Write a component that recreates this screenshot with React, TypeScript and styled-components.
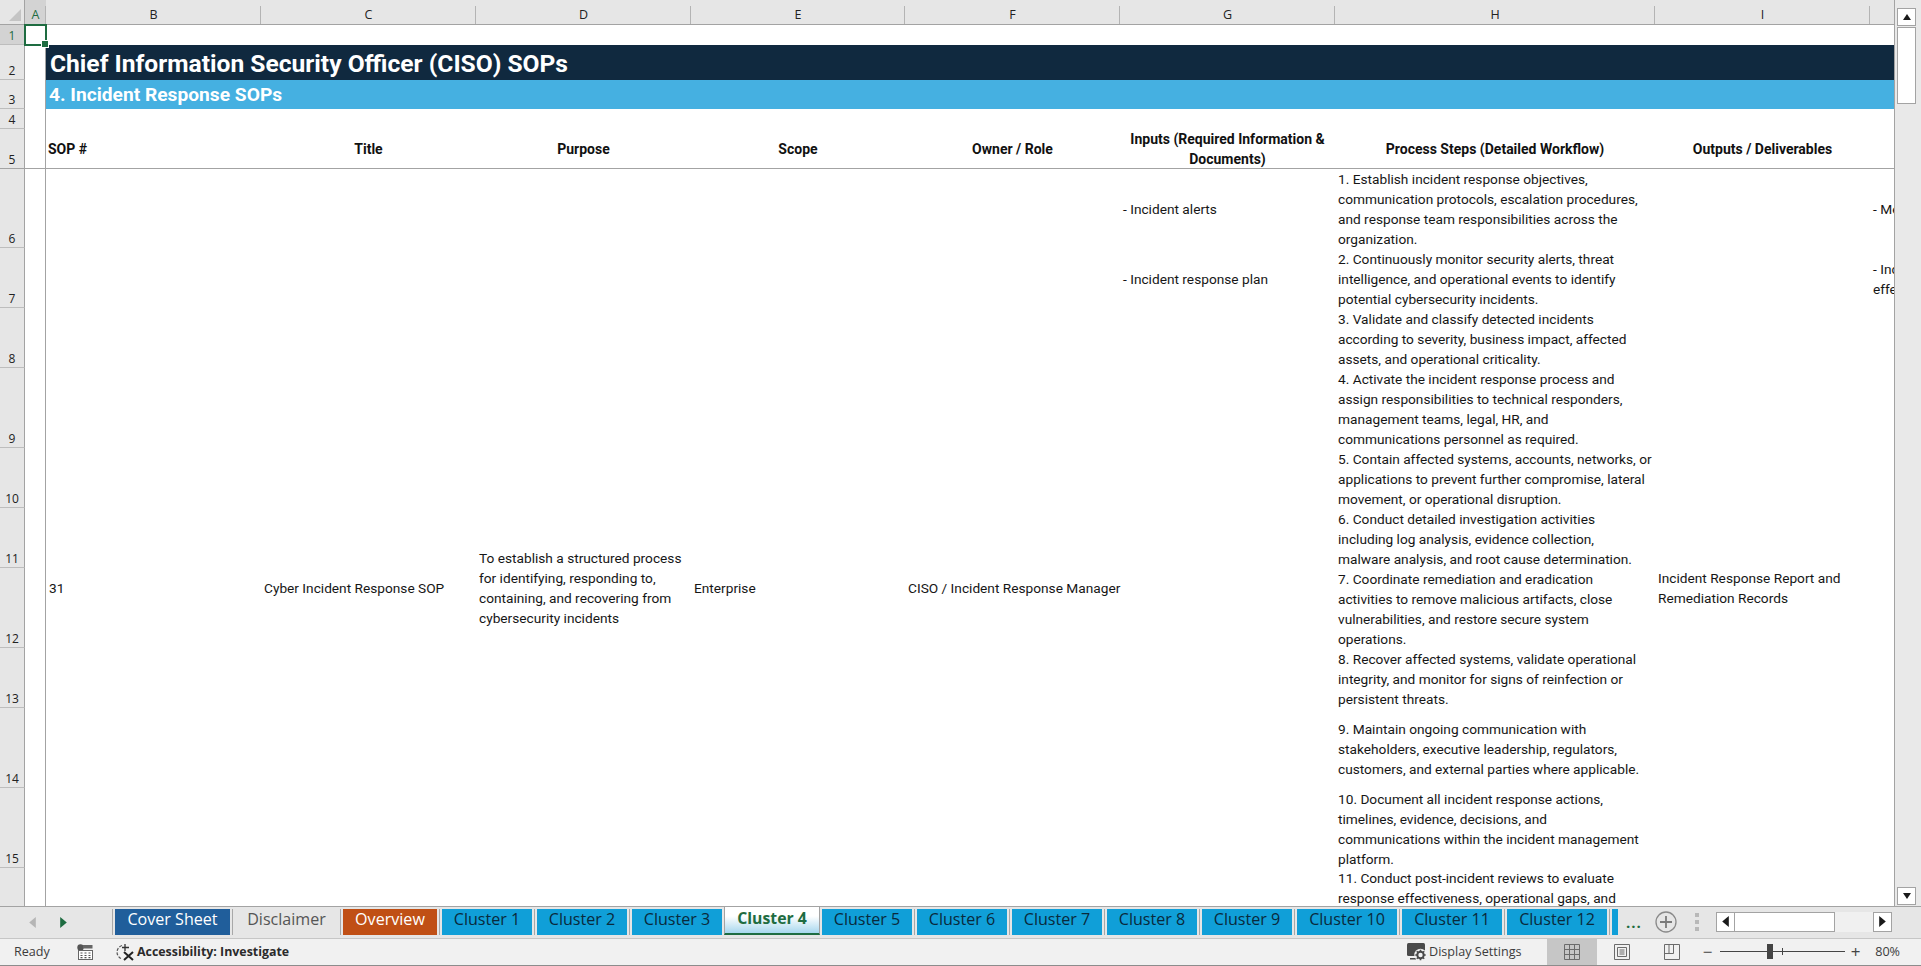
import React, {FC} from 'react';
import styled, {createGlobalStyle} from 'styled-components';

const SHEET_FONT = `Roboto, "Liberation Sans", sans-serif`;
const UI_FONT = `"Open Sans", "Noto Sans", sans-serif`;
const GREEN = '#1e6c41';

const GlobalStyle = createGlobalStyle`
  html, body {
    margin: 0;
    padding: 0;
    background: #e6e6e6;
  }
  * {
    box-sizing: border-box;
  }
`;

const Window = styled.div`
  width: 1921px;
  height: 966px;
  display: flex;
  flex-direction: column;
  overflow: hidden;
`;

const SheetArea = styled.div`
  height: 906px;
  display: flex;
`;

const Grid = styled.div`
  width: 1894px;
  height: 906px;
  overflow: hidden;
  background: #fff;
  display: grid;
  grid-template-columns: 25px 21px 215px 215px 215px 214px 215px 215px 320px 215px 215px;
  grid-template-rows: 25px 20px 35px 29px 20px 40px 79px 60px 60px 80px 60px 60px 80px 60px 80px 80px 80px 58px;
  font-family: ${SHEET_FONT};
  font-size: 13.7px;
  line-height: 20px;
  color: #161616;
`;

const Corner = styled.div`
  grid-column: 1;
  grid-row: 1;
  background: #e6e6e6;
  border-bottom: 1px solid #a3a3a3;
  border-right: 1px solid #a3a3a3;
  position: relative;

  &::after {
    content: '';
    position: absolute;
    right: 3px;
    bottom: 3px;
    border-style: solid;
    border-width: 0 0 12px 12px;
    border-color: transparent transparent #c4c4c4 transparent;
  }
`;

const ColHead = styled.div<{ $col: number; $active?: boolean }>`
  grid-column: ${p => p.$col};
  grid-row: 1;
  background: ${p => (p.$active ? '#d3d3d3' : '#e6e6e6')};
  color: ${p => (p.$active ? GREEN : '#222')};
  border-bottom: 1px solid #a3a3a3;
  font-family: ${UI_FONT};
  font-size: 12.5px;
  line-height: 18px;
  padding-top: 6px;
  text-align: center;
  position: relative;

  &::after {
    content: '';
    position: absolute;
    right: 0;
    top: 6px;
    bottom: 0;
    width: 1px;
    background: #b4b4b4;
  }
`;

const RowHead = styled.div<{ $row: number; $span?: number; $active?: boolean; $last?: boolean }>`
  grid-column: 1;
  grid-row: ${p => p.$row} / span ${p => p.$span || 1};
  background: ${p => (p.$active ? '#d3d3d3' : '#e6e6e6')};
  color: ${p => (p.$active ? GREEN : '#222')};
  border-right: 1px solid #a3a3a3;
  border-bottom: 1px solid ${p => (p.$last ? '#a3a3a3' : '#bdbdbd')};
  font-family: ${UI_FONT};
  font-size: 12px;
  line-height: 16px;
  display: flex;
  align-items: flex-end;
  justify-content: center;
`;

const FrozenColumn = styled.div<{ $row: number; $span: number; $header?: boolean }>`
  grid-column: 2;
  grid-row: ${p => p.$row} / span ${p => p.$span};
  border-right: 1px solid #a3a3a3;
  border-bottom: ${p => (p.$header ? '1px solid #a3a3a3' : 'none')};
`;

const SelectedCell = styled.div`
  grid-column: 2;
  grid-row: 2;
  border: 2px solid ${GREEN};
  margin: -1px -1px -1px -1px;
  position: relative;
  z-index: 2;

  &::after {
    content: '';
    position: absolute;
    right: -4px;
    bottom: -4px;
    width: 6px;
    height: 6px;
    background: ${GREEN};
    border: 1px solid #fff;
  }
`;

const Band = styled.div<{ $row: number; $sub?: boolean }>`
  grid-column: 3 / -1;
  grid-row: ${p => p.$row};
  background: ${p => (p.$sub ? '#45b0e1' : '#10293f')};
  color: #fff;
  font-weight: 700;
  font-size: ${p => (p.$sub ? '19.2px' : '24.6px')};
  line-height: 1;
  padding: ${p => (p.$sub ? '1px 0 0 3px' : '4px 0 0 4px')};
  display: flex;
  align-items: center;
`;

const HeaderCell = styled.div<{ $col: number; $left?: boolean }>`
  grid-column: ${p => p.$col};
  grid-row: 6;
  border-bottom: 1px solid #a3a3a3;
  font-weight: 700;
  font-size: 14px;
  color: #111;
  display: flex;
  align-items: center;
  justify-content: ${p => (p.$left ? 'flex-start' : 'center')};
  text-align: ${p => (p.$left ? 'left' : 'center')};
  padding: 0 2px;
`;

const MergedCell = styled.div<{ $col: number }>`
  grid-column: ${p => p.$col};
  grid-row: 7 / span 12;
  display: flex;
  align-items: center;
  padding-left: 3px;
  white-space: pre;
`;

const RowCell = styled.div<{ $col: number; $row: number; $top?: boolean }>`
  grid-column: ${p => p.$col};
  grid-row: ${p => p.$row};
  display: flex;
  align-items: ${p => (p.$top ? 'flex-start' : 'center')};
  padding: ${p => (p.$top ? '0 3px' : '1px 3px 0')};
  white-space: pre-line;
  overflow: hidden;
`;

const VScroll = styled.div`
  flex: 1;
  background: #e9e9e9;
  border-left: 1px solid #a3a3a3;
  padding: 8px 5px 1px 2px;
  display: flex;
  flex-direction: column;
  gap: 1px;
`;

const VButton = styled.div<{ $h: number }>`
  height: ${p => p.$h}px;
  background: #fff;
  border: 1px solid #a3a3a3;
  display: flex;
  align-items: center;
  justify-content: center;
  flex: none;
`;

const VTrack = styled.div`
  flex: 1;
`;

const TabBar = styled.div`
  height: 32px;
  background: #e6e6e6;
  border-top: 1px solid #a3a3a3;
  display: flex;
  position: relative;
`;

const TabNav = styled.div`
  width: 110px;
  flex: none;
  display: flex;
  align-items: center;
  gap: 20px;
  padding: 0 0 0 27px;
`;

const TabList = styled.div`
  width: 1508px;
  flex: none;
  display: flex;
  align-items: flex-start;
  overflow: hidden;
`;

const TabSep = styled.div`
  width: 1px;
  height: 26px;
  margin: 2px 2px 0;
  background: #a8a8a8;
  flex: none;
`;

const Tab = styled.div<{ $w: number; $bg?: string; $fg: string }>`
  width: ${p => p.$w}px;
  height: 26px;
  margin-top: 2px;
  flex: none;
  background: ${p => p.$bg || 'transparent'};
  color: ${p => p.$fg};
  font-family: ${UI_FONT};
  font-size: 16.1px;
  line-height: 20px;
  text-align: center;
  overflow: hidden;
`;

const ActiveTab = styled.div`
  width: 96px;
  height: 29px;
  margin: -1px 2px 0 2px;
  flex: none;
  background: linear-gradient(#fff 35%, #a7d7ee);
  border: 1px solid #a3a3a3;
  border-bottom: 2px solid ${GREEN};
  color: ${GREEN};
  font-family: ${UI_FONT};
  font-size: 15.8px;
  font-weight: 700;
  line-height: 23px;
  text-align: center;
`;

const TabTools = styled.div`
  flex: 1;
  display: flex;
  align-items: center;
  padding-bottom: 2px;
`;

const MoreDots = styled.div`
  width: 30px;
  padding-left: 8px;
  color: ${GREEN};
  font-family: ${UI_FONT};
  font-size: 15px;
  font-weight: 700;
  letter-spacing: 1px;
  line-height: 18px;
`;

const PlusSlot = styled.div`
  width: 22px;
  height: 22px;
  margin-left: 7px;
`;

const Splitter = styled.div`
  width: 4px;
  height: 18px;
  margin-left: 18px;
  background: repeating-linear-gradient(#b8b8b8 0 4px, transparent 4px 7px);
`;

const HScroll = styled.div`
  margin-left: 17px;
  width: 176px;
  height: 20px;
  display: flex;
  background: #f0f0f0;
`;

const HButton = styled.div<{ $end?: boolean }>`
  width: 19px;
  background: #fff;
  border: 1px solid #a3a3a3;
  display: flex;
  align-items: center;
  justify-content: center;
  margin-left: ${p => (p.$end ? 'auto' : '0')};
  flex: none;
`;

const HThumb = styled.div`
  width: 100px;
  background: #fff;
  border: 1px solid #a3a3a3;
  border-left: none;
`;

const StatusBar = styled.div`
  height: 28px;
  background: #f1f1f1;
  border-top: 1px solid #c6c6c6;
  border-bottom: 1px solid #8c8c8c;
  padding-bottom: 1px;
  display: flex;
  align-items: center;
  font-family: ${UI_FONT};
  font-size: 12.6px;
  color: #3c3c3c;
`;

const Ready = styled.span`
  margin-left: 14px;
  width: 63px;
`;

const MacroSlot = styled.div`
  width: 38px;
  height: 16px;
`;

const A11y = styled.div`
  display: flex;
  align-items: center;
  gap: 2px;
  font-weight: 700;
  font-size: 12.4px;
  color: #2b2b2b;
`;

const DisplaySettings = styled.div`
  margin-left: auto;
  display: flex;
  align-items: center;
  gap: 2px;
`;

const ViewButtons = styled.div`
  display: flex;
  margin-left: 25px;
  align-self: stretch;
  margin-bottom: -1px;
`;

const ViewButton = styled.div<{ $active?: boolean }>`
  width: 50px;
  background: ${p => (p.$active ? '#c6c6c6' : 'transparent')};
  display: flex;
  align-items: center;
  justify-content: center;
`;

const ZoomGroup = styled.div`
  display: flex;
  align-items: center;
  margin-left: 5px;
  width: 219.5px;
  padding-right: 21px;
`;

const ZoomGlyph = styled.span`
  width: 12px;
  text-align: center;
  font-size: 17px;
  line-height: 20px;
  color: #444;
  flex: none;
`;

const Slider = styled.div`
  width: 125px;
  height: 1px;
  background: #444;
  margin: 0 5px 0 6px;
  flex: none;
  position: relative;
`;

const SliderThumb = styled.div`
  position: absolute;
  left: 47px;
  top: -7px;
  width: 6px;
  height: 15px;
  background: #444;
`;

const SliderTick = styled.div`
  position: absolute;
  left: 62px;
  top: -3px;
  width: 1px;
  height: 7px;
  background: #444;
`;

const ZoomValue = styled.span`
  margin-left: auto;
`;

const Triangle: FC<{ dir: 'up' | 'down' | 'left' | 'right'; color?: string; size?: number }> = ({dir, color = '#1a1a1a', size = 10}) => {
    const pts = {
        up: '1,8 9,8 5,2',
        down: '1,2 9,2 5,8',
        left: '8,0 8,10 2,5',
        right: '2,0 2,10 8,5',
    }[dir];
    return (
        <svg width={size} height={size} viewBox="0 0 10 10">
            <polygon points={pts} fill={color}/>
        </svg>
    );
};

const MacroIcon = () => (
    <svg width="16" height="16" viewBox="0 0 16 16">
        <circle cx="3.5" cy="3.5" r="3.2" fill="#555"/>
        <rect x="6" y="1" width="9.5" height="3.5" fill="#666"/>
        <rect x="1.5" y="6.500" width="14" height="9" fill="#fff" stroke="#666"/>
        <path d="M3.5 9h2M7.5 9h2M11.5 9h2M3.5 11.5h2M7.5 11.5h2M11.5 11.5h2M3.5 13.7h2M7.5 13.7h2M11.5 13.7h2" stroke="#555" strokeWidth="1.2"/>
    </svg>
);

const A11yIcon = () => (
    <svg width="20" height="18" viewBox="0 0 20 18" fill="none">
        <path d="M7 2.5 A7 7 0 0 0 6 15.5" stroke="#555" strokeWidth="1.2" strokeDasharray="3 1.5"/>
        <path d="M10 1v7M7 4.5h7" stroke="#333" strokeWidth="1.3"/>
        <path d="M9 9l9 8M18 9l-9 8" stroke="#222" strokeWidth="2"/>
    </svg>
);

const DisplayIcon = () => (
    <svg width="20" height="18" viewBox="0 0 20 18">
        <rect x="0" y="0" width="18" height="13" rx="1.5" fill="#4a4a4a"/>
        <rect x="3" y="15" width="6" height="1.5" fill="#4a4a4a"/>
        <circle cx="13.5" cy="12" r="6.2" fill="#f1f1f1"/>
        <circle cx="13.5" cy="12" r="3.2" fill="none" stroke="#4a4a4a" strokeWidth="2"/>
        <path d="M13.5 6.8v2M13.5 15.2v2M8.3 12h2M16.7 12h2M9.8 8.3l1.4 1.4M15.8 14.3l1.4 1.4M17.2 8.3l-1.4 1.4M11.2 14.3l-1.4 1.4" stroke="#4a4a4a" strokeWidth="1.6"/>
    </svg>
);

const NormalViewIcon = () => (
    <svg width="16" height="16" viewBox="0 0 16 16" fill="none" stroke="#6b6b6b">
        <path d="M.5.5h15v15H.5zM5.5.5v15M10.5.5v15M.5 5.5h15M.5 10.5h15"/>
    </svg>
);

const PageLayoutIcon = () => (
    <svg width="16" height="16" viewBox="0 0 16 16" fill="none" stroke="#6b6b6b">
        <path d="M.5.5h15v15H.5zM3.5 3.5h9v9h-9zM5.5 6h5M5.5 8h5M5.5 10h5"/>
    </svg>
);

const PageBreakIcon = () => (
    <svg width="16" height="16" viewBox="0 0 16 16" fill="none" stroke="#6b6b6b">
        <path d="M.5.5h15v15H.5zM.5 9.5h9M9.5.5v9M5 .5v9"/>
    </svg>
);

const PlusCircle = () => (
    <svg width="22" height="22" viewBox="0 0 22 22" fill="none">
        <circle cx="11" cy="11" r="10" stroke="#8a8a8a" strokeWidth="1.3"/>
        <path d="M11 5v12M5 11h12" stroke="#7a7a7a" strokeWidth="1.8"/>
    </svg>
);

interface SheetTab {
    name: string
    width: number
    bg?: string
    fg: string
}

const CLUSTER_BG = '#109fd8';
const CLUSTER_FG = '#0a2a3c';

const tabsBefore: SheetTab[] = [
    {name: 'Cover Sheet', width: 115, bg: '#205e9b', fg: '#fff'},
    {name: 'Disclaimer', width: 103, fg: '#555'},
    {name: 'Overview', width: 94, bg: '#c04f15', fg: '#fff'},
    {name: 'Cluster 1', width: 90, bg: CLUSTER_BG, fg: CLUSTER_FG},
    {name: 'Cluster 2', width: 90, bg: CLUSTER_BG, fg: CLUSTER_FG},
];

const tabsAfter: SheetTab[] = [
    {name: 'Cluster 5', width: 90, bg: CLUSTER_BG, fg: CLUSTER_FG},
    {name: 'Cluster 6', width: 90, bg: CLUSTER_BG, fg: CLUSTER_FG},
    {name: 'Cluster 7', width: 90, bg: CLUSTER_BG, fg: CLUSTER_FG},
    {name: 'Cluster 8', width: 90, bg: CLUSTER_BG, fg: CLUSTER_FG},
    {name: 'Cluster 9', width: 90, bg: CLUSTER_BG, fg: CLUSTER_FG},
    {name: 'Cluster 10', width: 100, bg: CLUSTER_BG, fg: CLUSTER_FG},
    {name: 'Cluster 11', width: 100, bg: CLUSTER_BG, fg: CLUSTER_FG},
    {name: 'Cluster 12', width: 100, bg: CLUSTER_BG, fg: CLUSTER_FG},
    {name: '', width: 100, bg: CLUSTER_BG, fg: CLUSTER_FG},
];

const columns = ['B', 'C', 'D', 'E', 'F', 'G', 'H', 'I'];

const rowLabels: number[] = [1, 2, 3, 4, 5, 6, 7, 8, 9, 10, 11, 12, 13, 14, 15];

const steps: string[] = [
    '1. Establish incident response objectives,\ncommunication protocols, escalation procedures,\nand response team responsibilities across the\norganization.',
    '2. Continuously monitor security alerts, threat\nintelligence, and operational events to identify\npotential cybersecurity incidents.',
    '3. Validate and classify detected incidents\naccording to severity, business impact, affected\nassets, and operational criticality.',
    '4. Activate the incident response process and\nassign responsibilities to technical responders,\nmanagement teams, legal, HR, and\ncommunications personnel as required.',
    '5. Contain affected systems, accounts, networks, or\napplications to prevent further compromise, lateral\nmovement, or operational disruption.',
    '6. Conduct detailed investigation activities\nincluding log analysis, evidence collection,\nmalware analysis, and root cause determination.',
    '7. Coordinate remediation and eradication\nactivities to remove malicious artifacts, close\nvulnerabilities, and restore secure system\noperations.',
    '8. Recover affected systems, validate operational\nintegrity, and monitor for signs of reinfection or\npersistent threats.',
    '9. Maintain ongoing communication with\nstakeholders, executive leadership, regulators,\ncustomers, and external parties where applicable.',
    '10. Document all incident response actions,\ntimelines, evidence, decisions, and\ncommunications within the incident management\nplatform.',
];

const App: FC = () => {
    return (
        <Window>
            <GlobalStyle/>
            <SheetArea>
                <Grid>
                    <Corner/>
                    <ColHead $col={2} $active>A</ColHead>
                    {columns.map((c, i) => <ColHead key={c} $col={i + 3}>{c}</ColHead>)}
                    <ColHead $col={11}>J</ColHead>

                    {rowLabels.map(n => (
                        <RowHead key={n} $row={n + 1} $active={n === 1} $last={n === 5}>{n}</RowHead>
                    ))}
                    <RowHead $row={17} $span={2}/>

                    <FrozenColumn $row={2} $span={5} $header/>
                    <FrozenColumn $row={7} $span={12}/>
                    <SelectedCell/>

                    <Band $row={3}>Chief Information Security Officer (CISO) SOPs</Band>
                    <Band $row={4} $sub>4. Incident Response SOPs</Band>

                    <HeaderCell $col={3} $left>SOP #</HeaderCell>
                    <HeaderCell $col={4}>Title</HeaderCell>
                    <HeaderCell $col={5}>Purpose</HeaderCell>
                    <HeaderCell $col={6}>Scope</HeaderCell>
                    <HeaderCell $col={7}>Owner / Role</HeaderCell>
                    <HeaderCell $col={8}>Inputs (Required Information &amp; Documents)</HeaderCell>
                    <HeaderCell $col={9}>Process Steps (Detailed Workflow)</HeaderCell>
                    <HeaderCell $col={10}>Outputs / Deliverables</HeaderCell>
                    <HeaderCell $col={11}/>

                    <MergedCell $col={3}>31</MergedCell>
                    <MergedCell $col={4}>Cyber Incident Response SOP</MergedCell>
                    <MergedCell $col={5}>{'To establish a structured process\nfor identifying, responding to,\ncontaining, and recovering from\ncybersecurity incidents'}</MergedCell>
                    <MergedCell $col={6}>Enterprise</MergedCell>
                    <MergedCell $col={7}>CISO / Incident Response Manager</MergedCell>
                    <MergedCell $col={10}>{'Incident Response Report and\nRemediation Records'}</MergedCell>

                    <RowCell $col={8} $row={7}>- Incident alerts</RowCell>
                    <RowCell $col={8} $row={8}>- Incident response plan</RowCell>
                    <RowCell $col={11} $row={7}>- Mean time to respond</RowCell>
                    <RowCell $col={11} $row={8}>{'- Incident containment\neffectiveness'}</RowCell>

                    {steps.map((s, i) => <RowCell key={i} $col={9} $row={i + 7}>{s}</RowCell>)}
                    <RowCell $col={9} $row={17} $top>{'11. Conduct post-incident reviews to evaluate\nresponse effectiveness, operational gaps, and'}</RowCell>
                </Grid>
                <VScroll>
                    <VButton $h={18}><Triangle dir="up"/></VButton>
                    <VButton $h={77}/>
                    <VTrack/>
                    <VButton $h={18}><Triangle dir="down"/></VButton>
                </VScroll>
            </SheetArea>

            <TabBar>
                <TabNav>
                    <Triangle dir="left" color="#b5b5b5" size={11}/>
                    <Triangle dir="right" color={GREEN} size={11}/>
                </TabNav>
                <TabList>
                    <TabSep/>
                    {tabsBefore.map(t => (
                        <React.Fragment key={t.name}>
                            <Tab $w={t.width} $bg={t.bg} $fg={t.fg}>{t.name}</Tab>
                            <TabSep/>
                        </React.Fragment>
                    ))}
                    <Tab $w={90} $bg={CLUSTER_BG} $fg={CLUSTER_FG}>Cluster 3</Tab>
                    <ActiveTab>Cluster 4</ActiveTab>
                    {tabsAfter.map((t, i) => (
                        <React.Fragment key={i}>
                            <Tab $w={t.width} $bg={t.bg} $fg={t.fg}>{t.name}</Tab>
                            <TabSep/>
                        </React.Fragment>
                    ))}
                </TabList>
                <TabTools>
                    <MoreDots>...</MoreDots>
                    <PlusSlot><PlusCircle/></PlusSlot>
                    <Splitter/>
                    <HScroll>
                        <HButton><Triangle dir="left" size={11}/></HButton>
                        <HThumb/>
                        <HButton $end><Triangle dir="right" size={11}/></HButton>
                    </HScroll>
                </TabTools>
            </TabBar>

            <StatusBar>
                <Ready>Ready</Ready>
                <MacroSlot><MacroIcon/></MacroSlot>
                <A11y><A11yIcon/>Accessibility: Investigate</A11y>
                <DisplaySettings><DisplayIcon/>Display Settings</DisplaySettings>
                <ViewButtons>
                    <ViewButton $active><NormalViewIcon/></ViewButton>
                    <ViewButton><PageLayoutIcon/></ViewButton>
                    <ViewButton><PageBreakIcon/></ViewButton>
                </ViewButtons>
                <ZoomGroup>
                    <ZoomGlyph>−</ZoomGlyph>
                    <Slider>
                        <SliderThumb/>
                        <SliderTick/>
                    </Slider>
                    <ZoomGlyph>+</ZoomGlyph>
                    <ZoomValue>80%</ZoomValue>
                </ZoomGroup>
            </StatusBar>
        </Window>
    );
};

export default App;
